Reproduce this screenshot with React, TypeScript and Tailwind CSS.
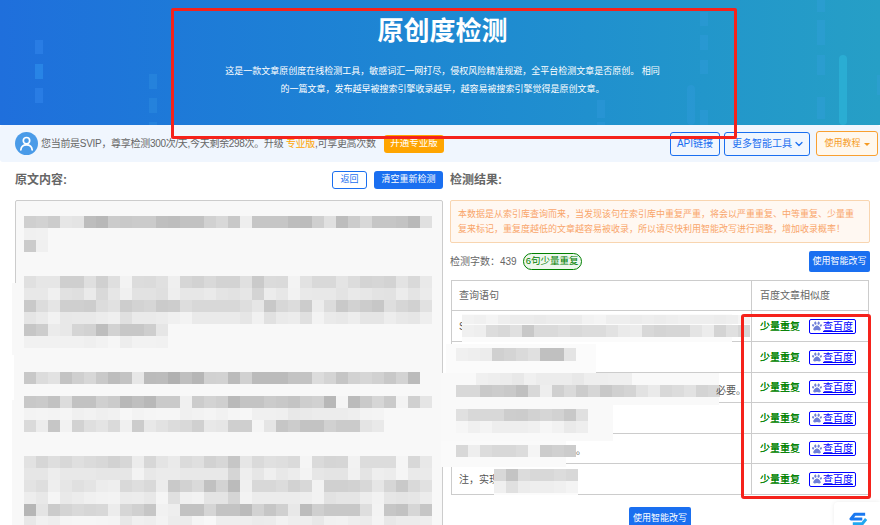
import React from "react";
import { FaPaw } from "react-icons/fa";
import { ChevronDown } from "lucide-react";

const FONT = "font-['Liberation_Sans','Noto_Sans_CJK_SC',sans-serif]";
const C = "\uFF0C"; // full-width comma
const COLON = "\uFF1A"; // full-width colon
const EX = "\uFF01";

const heroText = `这是一款文章原创度在线检测工具${C}敏感词汇一网打尽${C}侵权风险精准规避${C}全平台检测文章是否原创。 相同的一篇文章${C}发布越早被搜索引擎收录越早${C}越容易被搜索引擎觉得是原创文章。`;
const noticeText = `本数据是从索引库查询而来${C}当发现该句在索引库中重复严重${C}将会以严重重复、中等重复、少量重复来标记${C}重复度越低的文章越容易被收录${C}所以请尽快利用智能改写进行调整${C}增加收录概率${EX}`;

// Pixelated (censored) blocks: each token is a 2-hex gray for one 12px cell
function Strip({ cells, h = 12 }: { cells: string; h?: number }) {
  const list = cells.split(" ").filter(Boolean);
  return (
    <div className="flex" style={{ height: h }}>
      {list.map((c, i) => (
        <div key={i} className="w-[12px] shrink-0" style={{ background: `#${c}${c}${c}` }} />
      ))}
    </div>
  );
}

function Paragraph({ rows }: { rows: string[] }) {
  return (
    <div>
      {rows.map((r, i) => (
        <Strip key={i} cells={r} />
      ))}
    </div>
  );
}

const p1 = ["cf d2 cc e6 e4 bd b8 cb c9 cb cb bf bd c2 c2 d1 d8 c8 ee c6 c6 c6 bd bc cf e0 bd cc d8 c6 c6 c3 b9 e0", "f0 f1", "cb f0"];
const p2 = [
  "e0 e6 e6 cf cf df d0 df f3 dc db e0 ef d6 d2 d9 d3 d3 e0 ca db da f3 e2 d9 d9 e4 dc d4 d6 d3 e3 d9 e9",
  "e8 e8 f0 e1 df ea d9 e6 f0 e2 e2 df ee e7 e7 ea e4 e2 e6 d4 ec e7 f2 e9 e8 e8 e3 e9 e7 e3 e2 ec e4 eb",
  "c9 dc e5 cf cf cd dc e1 cd d3 d6 cb cd dd d8 d8 d8 d8 de e6 c8 d7 dc cc ec dc c9 d2 cc c7 de d6 d1 e1",
  "e5 ea f2 e8 e9 e9 ec ef e0 ea ea ec f0 f3 ea ea ea ea e6 f1 e1 ea ec e0 f3 ea e8 ed e5 e5 ed e8 e6 ee",
  "c6 cd eb e8 d5 d2 be d2 c7 c7 ce e6",
  "f1 f1 f1 f1 f1 ef f2 f6 ed f2 f2 f1",
];
const p3 = ["c8 dc e2 c3 cf d7 c9 bd c3 e7 bb bc b1 bf b6 d1 d2 bb d1 bb bb bb c3 c3 dc d4 c5 d2 d6 d1 c8 d3 bb"];
const p4 = [
  "c8 ca c2 dc c2 c2 d0 cb b8 bf b8 ca ca f0 cc d3 cf b9 c4 c4 cb c8 c4 ce d1 b8 f5 bb ca d6 ca f3 d0 e5",
  "f3 f4 f3 f5 f0 f2 ef f1 f7 f3 f5 f6 f6 f0 f2 f4 f1 f5 f7 f0 f0 ef e8 ea ec ec ec ee f3 f4",
  "da ec c6 f2 d2 df e4 da f0 cc e8 e2 dc d9 d0 e8 e6 cf cf f5 e5 c6 cc c3 c3 d1 cb cb e4 e9",
];
const p5 = [
  "e2 d6 de d8 df db d8 d2 d7 ec d7 e4 ea db df d2 d7 c6 e6 da e0 de da f5 da d5 d6 f2 dc dc dc f5 d8 e8",
  "e6 e6 ed e8 e8 e8 e6 e6 e6 f3 e8 eb eb e8 e8 e8 e8 d5 ee e6 ef e8 ec f3 e6 e4 e4 f1 e4 ee ec f5 ea ea",
  "e3 de ee e6 e0 e4 ec ee d9 de d9 ec c9 d2 da c1 d3 bb f0 d8 d8 dc d2 d8 f2 d0 d0 d2 d8 e6 d6 c9 d9 e1",
  "ed e8 f5 e9 ec f0 f2 f3 eb ec e8 f5 e0 f0 f2 e4 e4 d5 f3 ec ec ec ec ee f2 e2 e5 e5 ed f2 e6 e4 e6 ec",
  "b6 e4 cb d4 d9 d6 d8 ec d6 d0 c6 f1 ee c2 c2 d5 c3 c3 bb d2 c6 d0 e8 bc cf c8 c8 c8 de f3 c6 c2 d6 c6",
  "e8 f1 ee f5 f6 f6 f5 f4 e8 f0 ee f3 ec ec f5 f8 ee ee ee eb ec f2 ee ee e8 f1 f2 ee ec f4 e8 ec ec ee",
];

function Row({ text, h }: { text?: string; h: string }) {
  return (
    <div className={`flex border-b border-[#ccc] ${h}`}>
      <div className="flex w-[300px] items-center border-r border-[#ccc] pl-[7px] text-[10px] text-[#555]">
        <span>{text}</span>
      </div>
      <div className="flex flex-1 items-center pl-[8px]">
        <span className="w-[49px] text-[10px] text-[#008000] [text-shadow:0_0_0.4px_#008000]">少量重复</span>
        <span className="flex h-[15px] w-[47px] items-center justify-center gap-[1px] rounded-[2px] border border-[#0000ff] text-[10px] text-[#0000ff] underline">
          <FaPaw className="h-[10px] w-[10px] text-[#6f7fd8]" />
          查百度
        </span>
      </div>
    </div>
  );
}

export default function App() {
  return (
    <div className={`relative h-[525px] w-[880px] overflow-hidden bg-white ${FONT}`}>
      {/* Hero */}
      <header className="relative h-[125px] overflow-hidden bg-gradient-to-r from-[#1f6fdc] to-[#269fc6] text-center text-white">
        <svg className="absolute inset-0 h-full w-full" viewBox="0 0 880 125" aria-hidden="true">
          <g fill="#3aa0e8" fillOpacity="0.25">
            <rect x="35" y="40" width="8" height="14" fill="#2c80e6" fillOpacity="0.8" />
            <rect x="35" y="64" width="8" height="15" fill="#2a8ae8" fillOpacity="0.8" />
            <rect x="35" y="88" width="8" height="15" fill="#2c80e6" fillOpacity="0.8" />
            <rect x="149" y="74" width="8" height="15" />
            <rect x="149" y="98" width="8" height="15" />
            <rect x="149" y="122" width="8" height="3" />
            <rect x="597" y="100" width="8" height="18" />
            <rect x="597" y="122" width="8" height="3" />
            <rect x="687" y="85" width="8" height="40" rx="4" />
            <rect x="700" y="12" width="8" height="14" />
            <rect x="700" y="35" width="8" height="15" />
            <rect x="700" y="60" width="8" height="14" />
            <rect x="700" y="110" width="8" height="15" />
            <rect x="817" y="0" width="8" height="12" />
            <rect x="817" y="20" width="8" height="25" />
            <rect x="817" y="55" width="8" height="20" />
            <rect x="817" y="97" width="8" height="22" />
            <rect x="839" y="55" width="8" height="70" rx="4" fill="#2cb4d8" fillOpacity="0.7" />
            <rect x="877" y="75" width="3" height="20" />
          </g>
        </svg>
        <div className="relative flex flex-col items-center pl-[5px]">
          <h1 className="mt-[14px] text-[26px] leading-[34px] font-bold">原创度检测</h1>
          <p className="mt-[14px] w-[442px] text-[9px] leading-[18px]">{heroText}</p>
        </div>
      </header>

      {/* Status bar */}
      <div className="flex h-[37px] items-center rounded-[3px] bg-[#f0f6fe] pl-[15px] pr-[2px]">
        <span className="flex h-[23px] w-[23px] items-center justify-center rounded-full bg-[#4a9be8]">
          <svg viewBox="0 0 24 24" className="h-[17px] w-[17px]" fill="none" stroke="#fff" strokeWidth="2.4" strokeLinecap="round">
            <circle cx="12" cy="8" r="4.5" />
            <path d="M4 21c.5-4.5 3.500-7 8-7s7.500 2.500 8 7" />
          </svg>
        </span>
        <span className="ml-[3px] w-[343px] whitespace-nowrap text-[10px] tracking-[-0.3px] text-[#666]">
          您当前是SVIP{C}尊享检测300次/天,今天剩余298次。升级 <span className="text-[#ffa500]">专业版</span>,可享更高次数
        </span>
        <span className="flex h-[18px] w-[60px] items-center justify-center rounded-[3px] bg-[#ffa500] text-[9.5px] text-white">开通专业版</span>
        <div className="ml-auto flex items-center">
          <span className="flex h-[24px] w-[50px] items-center justify-center rounded-[3px] border border-[#1a6ff0] text-[10px] text-[#1a6ff0]">API链接</span>
          <span className="ml-[4px] flex h-[24px] w-[86px] items-center justify-center gap-[1px] rounded-[3px] border border-[#1a6ff0] pl-[3px] text-[10px] text-[#1a6ff0]">
            更多智能工具
            <ChevronDown className="h-[12px] w-[12px]" strokeWidth={2.5} />
          </span>
          <span className="ml-[6px] flex h-[25px] w-[62px] items-center justify-center gap-[3px] rounded-[3px] border border-[#f9a030] bg-[#fff8ee] text-[9px] text-[#f59a23]">
            使用教程
            <span className="mt-[2px] h-0 w-0 border-x-[3px] border-t-[3px] border-x-transparent border-t-[#f59a23]" />
          </span>
        </div>
      </div>

      {/* Main columns */}
      <main className="flex pl-[15px] pr-[10px]">
        {/* Left */}
        <section className="w-[428px] shrink-0">
          <div className="flex h-[38px] items-center justify-between pb-[4px] pt-[2px]">
            <h2 className="text-[12px] font-bold text-[#666]">原文内容:</h2>
            <div className="flex gap-[7px]">
              <span className="flex h-[18px] w-[35px] items-center justify-center rounded-[3px] border border-[#1a6ff0] text-[9px] text-[#1a6ff0]">返回</span>
              <span className="flex h-[18px] w-[69px] items-center justify-center rounded-[3px] bg-[#1a6ff0] text-[9px] text-white">清空重新检测</span>
            </div>
          </div>
          <div className="h-[400px] rounded-[2px] border border-[#ccc] bg-[#f8f8f8] pl-[8px] pt-[15px]">
            <Paragraph rows={p1} />
            <div className="mt-[24px]"><Paragraph rows={p2} /></div>
            <div className="mt-[24px]"><Paragraph rows={p3} /></div>
            <div className="mt-[12px]"><Paragraph rows={p4} /></div>
            <div className="mt-[24px]"><Paragraph rows={p5} /></div>
          </div>
        </section>

        {/* Right */}
        <section className="ml-[7px] w-[420px] shrink-0">
          <div className="flex h-[38px] items-center pb-[4px] pt-[2px]">
            <h2 className="text-[12px] font-bold text-[#666]">检测结果:</h2>
          </div>
          <div className="h-[43px] rounded-[2px] border border-[#f8d5b0] bg-[#fff8f2] px-[7px] pt-[6px] text-[9px] leading-[14.5px] text-[#f9a66b]">
            {noticeText}
          </div>
          <div className="mt-[8px] flex h-[21px] items-center">
            <span className="text-[10px] text-[#666]">检测字数{COLON}439</span>
            <span className="ml-[6px] flex h-[17px] w-[59px] items-center justify-center rounded-full border border-[#008000] bg-[#eef7ee] text-[9.5px] text-[#008000]">6句少量重复</span>
            <span className="ml-auto flex h-[21px] w-[61px] items-center justify-center rounded-[2px] bg-[#1a6ff0] text-[9px] text-white">使用智能改写</span>
          </div>
          <div className="relative ml-[1px] mt-[8px] w-[418px] border-x border-t border-[#ccc]">
            <div className="flex h-[30px] border-b border-[#ccc] text-[10px] text-[#666]">
              <div className="flex w-[300px] items-center border-r border-[#ccc] pl-[7px]">查询语句</div>
              <div className="flex flex-1 items-center pl-[8px]">百度文章相似度</div>
            </div>
            <Row text="S" h="h-[31px]" />
            <Row text="" h="h-[31px]" />
            <Row text="" h="h-[30px]" />
            <Row text="" h="h-[31px]" />
            <Row text="" h="h-[30px]" />
            <Row text={`注${C}实现`} h="h-[31px]" />

            {/* Censoring patches over the sentence column */}
            <div className="absolute left-[-11px] top-[30px] h-[184px] w-[295px]">
              <div className="absolute left-[21px] top-[3px] h-[28px] w-[270px] bg-[#fbfbfb]" />
              <div className="absolute left-[21px] top-[4px]"><Strip h={9} cells="f2 f0 f4 ee ec ec ea ec ec ec f2 f4 ee ee ec ee ec ee f0 ee ee ec ee f4" /></div>
              <div className="absolute left-[21px] top-[14px]"><Strip cells="f0 ee dc d8 e0 c8 da da de d9 dc dc e2 ea ec d8 d4 d6 d6 e4 ec d4 e0 d6" /></div>
              <div className="absolute left-[5px] top-[33px] h-[30px] w-[150px] bg-[#fbfbfb]" />
              <div className="absolute left-[15px] top-[37px]"><Strip h={13} cells="f0 ee ec d0 d4 da e0 c0 c0 e4" /></div>
              <div className="absolute left-[0px] top-[62px] h-[32px] w-[278px] bg-[#f9f9f9]" />
              <div className="absolute left-[0px] top-[94px] h-[36px] w-[172px] bg-[#f9f9f9]" />
              <div className="absolute left-[35px] top-[62px]"><Strip cells="f0 ee ec e8 f0 ec ec ec e8 ee ee ef ef" /></div>
              <div className="absolute left-[15px] top-[74px]"><Strip cells="d8 d8 c9 cc c9 c0 d8 ee d0 da cc d6 c8 d0 d4 e2 ea d8 dc e2 d4 d8" /></div>
              <div className="absolute left-[15px] top-[98px]"><Strip cells="e0 d8 d8 d8 cd cc d2 d6 d2 c8 e0" /></div>
              <div className="absolute left-[15px] top-[110px]"><Strip cells="f6 f0 f4 ee ee ee f0 f6 f2 ea ee" /></div>
              <div className="absolute left-[0px] top-[130px] h-[26px] w-[125px] bg-[#fafafa]" />
              <div className="absolute left-[15px] top-[134px]"><Strip cells="d8 ee dc d8 d8 dc f5 cc d0 cc" /></div>
              <div className="absolute left-[135px] top-[134px] text-[10px] leading-[12px] text-[#555]">。</div>
              <div className="absolute left-[53px] top-[158px] h-[26px] w-[84px] bg-[#fbfbfb]" />
              <div className="absolute left-[53px] top-[158px]"><Strip cells="d8 c4 dc d8 d8 dc d8" /></div>
              <div className="absolute left-[53px] top-[170px]"><Strip cells="f0 e0 ec ee ee f0 f4" /></div>
              <div className="absolute left-[275px] top-[74px] whitespace-nowrap text-[10px] leading-[12px] text-[#555]">必要。</div>
            </div>
          </div>
          <div className="mt-[12px] flex justify-center">
            <span className="flex h-[24px] w-[62px] items-center justify-center rounded-[2px] bg-[#1a6ff0] text-[9px] text-white">使用智能改写</span>
          </div>
        </section>
      </main>

      {/* Smudges that blot out the left panel edge in the screenshot */}
      <div className="absolute left-[12px] top-[283px] h-[72px] w-[12px] bg-[#f8f8f8]" />
      <div className="absolute left-[14px] top-[355px] h-[45px] w-[10px] bg-[#f8f8f8]" />
      <div className="absolute left-[12px] top-[400px] h-[125px] w-[12px] bg-[#f8f8f8]" />

      {/* Annotation rectangles drawn over the screenshot */}
      <div className="pointer-events-none absolute left-[171px] top-[8px] h-[131px] w-[566px] rounded-[2px] border-[3px] border-[#f5221b]" />
      <div className="pointer-events-none absolute left-[741px] top-[314px] h-[185px] w-[130px] rounded-[3px] border-[3px] border-[#f5221b]" />

      {/* Floating logo */}
      <div className="absolute bottom-0 right-0 flex h-[23px] w-[46px] items-start justify-start rounded-tl-[4px] bg-white pl-[15px] pt-[10px] shadow-[0_0_4px_rgba(0,0,0,0.08)]">
        <svg viewBox="0 0 20 14" className="h-[14px] w-[19px]" fill="none" stroke="#1a78f0" strokeWidth="3" strokeLinejoin="round">
          <path d="M17 2H6L2 7h12" />
          <path d="M4 12h10l4-5" stroke="#22a8f0" />
        </svg>
      </div>
    </div>
  );
}
